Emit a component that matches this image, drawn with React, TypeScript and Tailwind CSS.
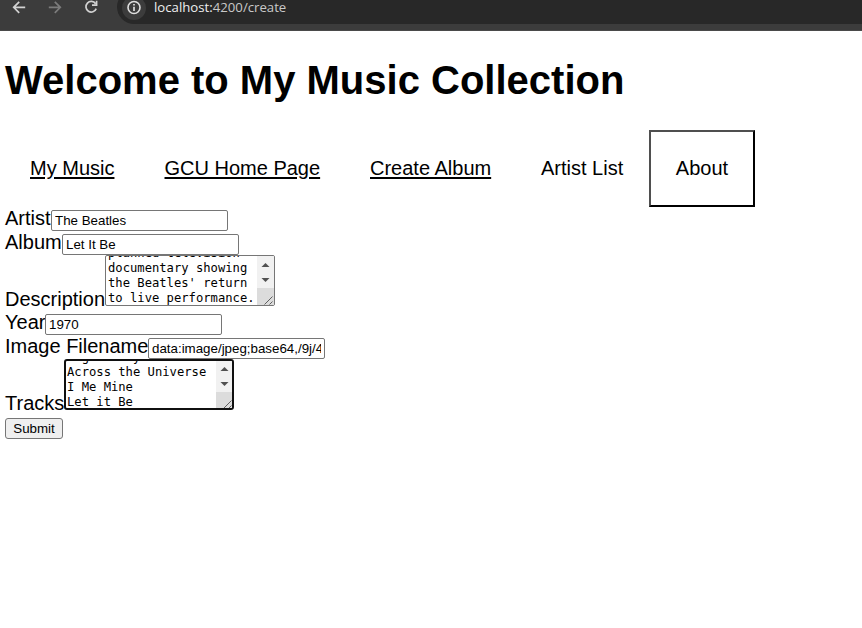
import type { ReactNode } from "react";

function BrowserBar() {
  return (
    <header className="flex h-[31px] overflow-hidden border-b border-[#4a4a4a] bg-[#3c3c3c]">
      <svg width="117" height="24" viewBox="0 0 117 24" fill="none" strokeWidth="1.7" className="shrink-0">
        <path d="M25.2 7.3H14M19.2 1.8L13.7 7.3L19.2 12.8" stroke="#d2d2d2" />
        <path d="M48.8 7.3H60M54.8 1.8L60.3 7.3L54.8 12.8" stroke="#7c7c7c" />
        <path d="M95.6 3.7A5.3 5.3 0 1 0 96.2 8.6M96.6 .8V5.2H92" stroke="#d2d2d2" />
      </svg>
      <div className="-mt-2.5 flex h-[34px] flex-1 items-center rounded-l-full bg-[#282828] pl-[5px]">
        <svg width="24" height="24" viewBox="0 0 24 24" className="mt-[1px] shrink-0">
          <circle cx="12" cy="12" r="12" fill="#3c3c3c" />
          <circle cx="12" cy="11.5" r="6" fill="none" stroke="#dedede" strokeWidth="1.6" />
          <path d="M12 10.7V15M12 8V9.5" stroke="#dedede" strokeWidth="1.7" />
        </svg>
        <span className="ml-2 font-['Open_Sans',sans-serif] text-[13.2px] leading-5 whitespace-nowrap text-[#c8c8c8]">
          <span className="text-[#eeeeee]">localhost:</span>4200/create
        </span>
      </div>
    </header>
  );
}

function Label({ children, className }: { children: ReactNode; className: string }) {
  return <label className={`block shrink-0 text-[20px] leading-6 whitespace-nowrap ${className}`}>{children}</label>;
}

function Field({ value }: { value: string }) {
  return (
    <input
      readOnly
      value={value}
      className="mt-1 block h-[21px] w-[177px] rounded-[2px] border border-[#767676] bg-white px-[3px] text-[13.333px] outline-none"
    />
  );
}

function ScrollBox({ lines, focused = false }: { lines: string[]; focused?: boolean }) {
  return (
    <div
      className={`flex h-[51px] w-[170px] overflow-hidden bg-white ${
        focused ? "rounded-[3px] border-2 border-[#101010]" : "rounded-[2px] border border-[#767676]"
      }`}
    >
      <div
        className={`flex min-w-0 flex-1 flex-col justify-end font-['DejaVu_Sans_Mono',monospace] text-[12.18px] leading-[15px] whitespace-pre ${
          focused ? "-mb-[2px] pl-[1px]" : "-mb-px pl-[2px]"
        }`}
      >
        {lines.map((line) => (
          <div key={line} className="h-[15px] shrink-0">{line}</div>
        ))}
      </div>
      <svg width="17" height="49" viewBox="0 0 17 49" className={`shrink-0 ${focused ? "-mt-px -mr-px" : ""}`}>
        <path d="M0 0H17V49H0Z" fill="#f1f1f1" />
        <path d="M0 32H17V49H0Z" fill="#dcdcdc" />
        <path d="M4.5 11L8.5 7L12.5 11ZM4.5 22L8.5 26L12.5 22Z" fill="#505050" />
        <path d="M7.5 48.5L15.5 40.5M12.5 48.5L15.5 45.5" stroke="#606060" />
      </svg>
    </div>
  );
}

export default function App() {
  return (
    <div className="h-[628px] overflow-hidden bg-white font-['Liberation_Sans',Arial,sans-serif] text-black">
      <BrowserBar />
      <main className="pl-[5px]">
        <h1 className="pt-[26px] text-[40px] leading-[46px] font-bold whitespace-nowrap">
          Welcome to My Music Collection
        </h1>
        <nav className="mt-[27px] flex h-[77px] items-center text-[20px] leading-6 whitespace-nowrap">
          <a className="mb-[2px] ml-[25px] w-[134.5px] underline decoration-2 underline-offset-2">My Music</a>
          <a className="mb-[2px] w-[205.5px] underline decoration-2 underline-offset-2">GCU Home Page</a>
          <a className="mb-[2px] w-[171px] underline decoration-2 underline-offset-2">Create Album</a>
          <a className="mb-[2px] w-[108px]">Artist List</a>
          <button className="h-[77px] w-[106px] border-2 border-t-[#4f4f4f] border-r-black border-b-black border-l-[#4f4f4f] pb-[2px]">
            About
          </button>
        </nav>
        <form className="-mt-px">
          <div className="flex h-6">
            <Label className="w-[46px]">Artist</Label>
            <Field value="The Beatles" />
          </div>
          <div className="flex h-6">
            <Label className="w-[57px]">Album</Label>
            <Field value="Let It Be" />
          </div>
          <div className="flex h-14 pt-[1px]">
            <Label className="w-[100px] pt-8">Description</Label>
            <ScrollBox lines={["planned television", "documentary showing", "the Beatles' return", "to live performance."]} />
          </div>
          <div className="flex h-6">
            <Label className="w-10">Year</Label>
            <Field value="1970" />
          </div>
          <div className="flex h-[25px]">
            <Label className="w-[143px]">Image Filename</Label>
            <Field value="data:image/jpeg;base64,/9j/4AAQSkZJRg" />
          </div>
          <div className="flex h-[59px]">
            <Label className="w-[59px] pt-8">Tracks</Label>
            <ScrollBox focused lines={["Dig a Pony", "Across the Universe", "I Me Mine", "Let it Be"]} />
          </div>
          <button type="button" className="block h-[21px] w-[58px] rounded-[3px] border border-[#767676] bg-[#efefef] text-[13.333px] leading-[15px]">
            Submit
          </button>
        </form>
      </main>
    </div>
  );
}
